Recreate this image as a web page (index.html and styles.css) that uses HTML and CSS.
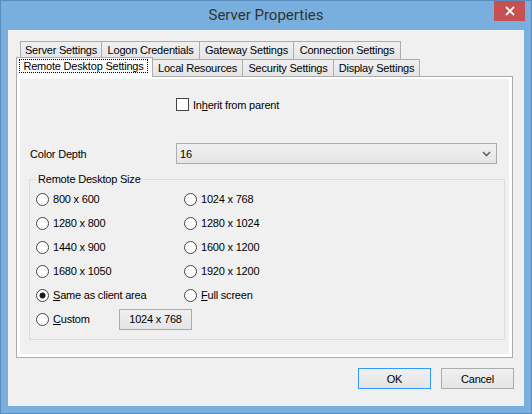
FILE: index.html
```html
<!DOCTYPE html>
<html>
<head>
<meta charset="utf-8">
<link rel="stylesheet" href="styles.css">
</head>
<body>
<div class="window">
  <div class="titlebar">
    <span class="title">Server Properties</span>
    <span class="close"><svg width="10" height="10" viewBox="0 0 10 10"><path d="M1 1 L9 9 M9 1 L1 9" stroke="#fff" stroke-width="1.8" fill="none"/></svg></span>
  </div>
  <div class="client">
    <div class="tabs">
      <div class="tabrow row1">
        <div class="tab w-server">Server Settings</div>
        <div class="tab w-logon">Logon Credentials</div>
        <div class="tab w-gateway">Gateway Settings</div>
        <div class="tab w-conn">Connection Settings</div>
      </div>
      <div class="tabrow row2">
        <div class="tab sel w-remote"><span class="focus">Remote Desktop Settings</span></div>
        <div class="tab w-local">Local Resources</div>
        <div class="tab w-security">Security Settings</div>
        <div class="tab w-display">Display Settings</div>
      </div>
      <div class="panel">
        <div class="page">
          <div class="inherit">
            <span class="check"></span>
            <span class="lbl">In<u>h</u>erit from parent</span>
          </div>
          <div class="depth">
            <span class="depth-lbl">Color Depth</span>
            <div class="combo">
              <span>16</span>
              <svg width="9" height="6" viewBox="0 0 9 6"><path d="M1 1 L4.5 4.5 L8 1" stroke="#666" stroke-width="1.6" fill="none"/></svg>
            </div>
          </div>
          <fieldset class="group">
            <legend>Remote Desktop Size</legend>
            <div class="grid">
              <div class="opt"><span class="radio"></span>800 x 600</div>
              <div class="opt"><span class="radio"></span>1024 x 768</div>
              <div class="opt"><span class="radio"></span>1280 x 800</div>
              <div class="opt"><span class="radio"></span>1280 x 1024</div>
              <div class="opt"><span class="radio"></span>1440 x 900</div>
              <div class="opt"><span class="radio"></span>1600 x 1200</div>
              <div class="opt"><span class="radio"></span>1680 x 1050</div>
              <div class="opt"><span class="radio"></span>1920 x 1200</div>
              <div class="opt"><span class="radio on"></span><span><u>S</u>ame as client area</span></div>
              <div class="opt"><span class="radio"></span><span><u>F</u>ull screen</span></div>
              <div class="custom-row">
                <div class="opt custom-opt"><span class="radio"></span><span><u>C</u>ustom</span></div>
                <div class="btn small">1024 x 768</div>
              </div>
            </div>
          </fieldset>
        </div>
      </div>
    </div>
    <div class="footer">
      <div class="btn default">OK</div>
      <div class="btn">Cancel</div>
    </div>
  </div>
</div>
</body>
</html>
```
FILE: styles.css
```css
html, body {
  margin: 0;
  padding: 0;
}
body {
  font-family: "Liberation Sans", Arial, sans-serif;
  font-size: 11px;
  letter-spacing: -0.2px;
  color: #000;
}
.window {
  width: 532px;
  height: 414px;
  box-sizing: border-box;
  border: 1px solid #5a8bbd;
  background: #79afdf;
  display: flex;
  flex-direction: column;
}
.titlebar {
  height: 29px;
  display: grid;
  grid-template-columns: 1fr auto 1fr;
  align-items: start;
}
.title {
  grid-column: 2;
  font-family: Roboto, "Noto Sans", sans-serif;
  font-size: 15px;
  letter-spacing: 0;
  color: #333;
  line-height: 29px;
}
.close {
  grid-column: 3;
  justify-self: end;
  margin-right: 6px;
  width: 31px;
  height: 20px;
  background: #c75050;
  display: flex;
  align-items: center;
  justify-content: center;
}
.close svg { display: block; }
.client {
  margin: 0 7px;
  height: 376px;
  background: #f0f0f0;
  display: flex;
  flex-direction: column;
}
.tabs {
  margin: 11px 0 0 8px;
  width: 497px;
}
.tabrow {
  display: flex;
  align-items: flex-end;
}
.row1 {
  height: 18px;
  padding-left: 4px;
}
.row2 {
  height: 17px;
}
.tab {
  box-sizing: border-box;
  border: 1px solid #acacac;
  border-bottom: none;
  background: linear-gradient(#f0f0f0, #e5e5e5);
  text-align: center;
  white-space: nowrap;
  margin-right: -1px;
}
.row1 .tab {
  height: 18px;
  line-height: 17px;
}
.row2 .tab {
  height: 17px;
  line-height: 16px;
}
.row2 .tab.sel {
  position: relative;
  z-index: 1;
  height: 20px;
  margin-top: -2px;
  margin-bottom: -1px;
  background: #fff;
  line-height: normal;
  display: flex;
}
.focus {
  display: block;
  flex: 1;
  margin: 1px 4px 4px 2px;
  border: 1px dotted #000;
  line-height: 12px;
  text-align: center;
}
.w-server { width: 82px; }
.w-logon { width: 99px; }
.w-gateway { width: 95px; }
.w-conn { width: 108px; }
.w-remote { width: 137px; }
.w-local { width: 91px; }
.w-security { width: 92px; }
.w-display { width: 87px; }
.panel {
  box-sizing: border-box;
  height: 282px;
  border: 1px solid #acacac;
  background: #fff;
  padding: 2px 3px 3px 3px;
}
.page {
  height: 275px;
  background: #f0f0f0;
  display: flex;
  flex-direction: column;
}
.inherit {
  margin: 19px 0 0 156px;
  display: flex;
  align-items: center;
  height: 13px;
  gap: 4px;
}
.check {
  width: 13px;
  height: 13px;
  box-sizing: border-box;
  border: 1px solid #444;
  background: #fff;
}
.depth {
  margin-top: 32px;
  display: flex;
  align-items: center;
  padding-left: 10px;
}
.depth-lbl {
  width: 146px;
}
.combo {
  box-sizing: border-box;
  width: 321px;
  height: 21px;
  border: 1px solid #acacac;
  background: linear-gradient(#f0f0f0, #e5e5e5);
  display: flex;
  align-items: center;
  justify-content: space-between;
  padding: 0 5px 0 3px;
}
.combo svg { display: block; }
.group {
  margin: 9px 0 0 9px;
  width: 476px;
  box-sizing: border-box;
  border: 1px solid #dcdcdc;
  padding: 1px 6px 8px 6px;
  min-width: 0;
}
.group legend {
  padding: 0 2px;
  line-height: 13px;
}
.grid {
  display: grid;
  grid-template-columns: 148px 1fr;
  grid-auto-rows: 24px;
}
.opt {
  display: flex;
  align-items: center;
  gap: 4px;
  white-space: nowrap;
}
.radio {
  width: 13px;
  height: 13px;
  box-sizing: border-box;
  border: 1px solid #444;
  border-radius: 50%;
  background: #fff;
  flex: none;
}
.radio.on {
  background: radial-gradient(circle, #1a1a1a 0, #1a1a1a 2.6px, #fff 3.4px);
}
.custom-row {
  grid-column: span 2;
  display: flex;
  align-items: center;
}
.custom-opt {
  width: 83px;
}
.btn {
  box-sizing: border-box;
  width: 73px;
  height: 21px;
  border: 1px solid #acacac;
  background: linear-gradient(#f0f0f0, #e5e5e5);
  display: flex;
  align-items: center;
  justify-content: center;
}
.btn.default {
  border-color: #3399ff;
}
.footer {
  display: flex;
  justify-content: flex-end;
  gap: 10px;
  margin-top: 10px;
  padding-right: 10px;
}
```
